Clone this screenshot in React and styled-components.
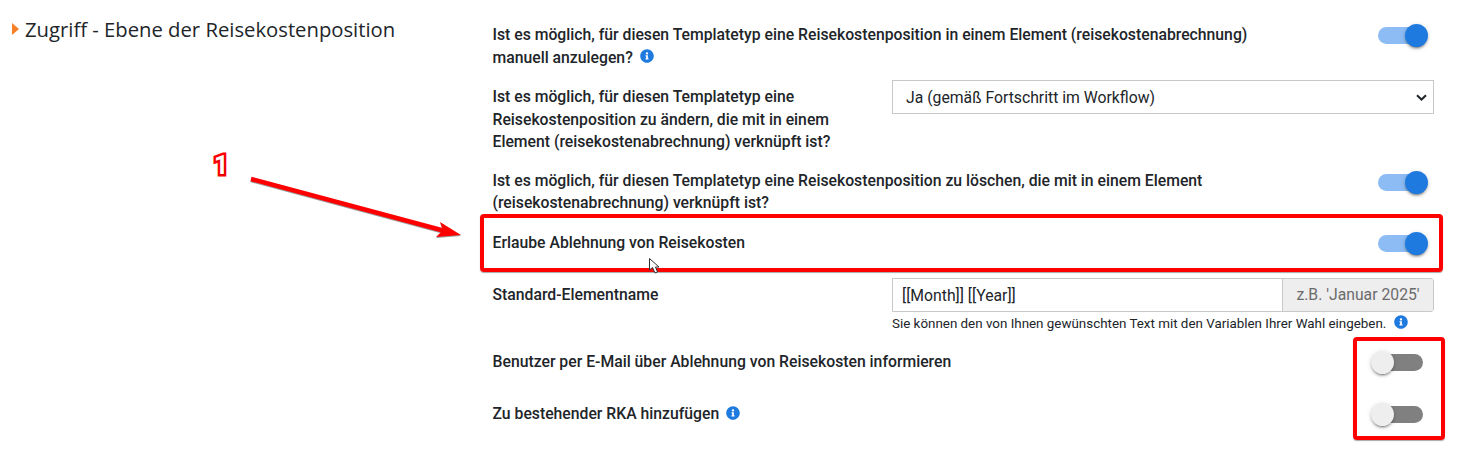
import React from "react";
import styled, { createGlobalStyle } from "styled-components";

const Global = createGlobalStyle`
  html, body { margin: 0; padding: 0; background: #fff; }
  body { font-family: Roboto, "Liberation Sans", sans-serif; color: #212529; font-size: 15.75px; line-height: 22.5px; }
`;

const Page = styled.div`
  position: relative;
  width: 1467px;
  height: 454px;
  overflow: hidden;
  display: flex;
`;

const Sidebar = styled.aside`
  width: 492.5px;
  flex: none;
  box-sizing: border-box;
  padding: 15px 0 0 12px;
`;

const Title = styled.h2`
  margin: 0;
  display: flex;
  align-items: center;
  gap: 6px;
  font: 400 20.25px/28px "Open Sans", sans-serif;
  color: #212529;
`;

const Caret = styled.span`
  width: 0;
  height: 0;
  border-left: 7px solid #f58025;
  border-top: 6px solid transparent;
  border-bottom: 6px solid transparent;
`;

const Form = styled.main`
  width: 941.5px;
  flex: none;
  padding-top: 24px;
`;

const Row = styled.div`
  display: flex;
  justify-content: space-between;
  align-items: flex-start;
  margin-top: ${(p) => p.$top || 0}px;
`;

const Label = styled.label`
  display: block;
  font-weight: 500;
  width: ${(p) => p.$w}px;
  padding-top: ${(p) => p.$pad || 0}px;
  flex: none;
`;

const InfoMark = styled.svg`
  display: inline-block;
  vertical-align: ${(p) => p.$drop}px;
  margin-left: ${(p) => p.$gap}px;
`;

const Info = ({ gap = 7, drop = -1 }) => (
  <InfoMark $gap={gap} $drop={drop} viewBox="0 0 512 512" width={14} height={14}>
    <path
      fill="#1f7ae0"
      d="M256 8C119 8 8 119 8 256s111 248 248 248 248-111 248-248S393 8 256 8zm0 110c23 0 42 19 42 42s-19 42-42 42-42-19-42-42 19-42 42-42zm56 254c0 7-5 12-12 12h-88c-7 0-12-5-12-12v-24c0-7 5-12 12-12h12v-64h-12c-7 0-12-5-12-12v-24c0-7 5-12 12-12h64c7 0 12 5 12 12v100h12c7 0 12 5 12 12v24z"
    />
  </InfoMark>
);

const Track = styled.div`
  position: relative;
  width: 47px;
  height: 17px;
  flex: none;
  border-radius: 9px;
  background: ${(p) => (p.$on ? "#8cbcf3" : "#808080")};
  margin-top: ${(p) => p.$top}px;
  margin-right: ${(p) => (p.$on ? 9 : 11)}px;
`;

const Thumb = styled.span`
  position: absolute;
  top: -3px;
  left: ${(p) => (p.$on ? "27px" : "-5px")};
  width: 23px;
  height: 23px;
  border-radius: 50%;
  background: ${(p) => (p.$on ? "#1f7ae0" : "#eeeeee")};
  box-shadow: 0 3px 1px -2px rgba(0, 0, 0, 0.25), 0 2px 2px 0 rgba(0, 0, 0, 0.2), 0 1px 5px 0 rgba(0, 0, 0, 0.16);
`;

const Toggle = ({ on, top }) => (
  <Track $on={on} $top={top}>
    <Thumb $on={on} />
  </Track>
);

const SelectBox = styled.div`
  position: relative;
  width: 542px;
  height: 34px;
  flex: none;
`;

const Select = styled.select`
  appearance: none;
  display: block;
  width: 100%;
  height: 100%;
  box-sizing: border-box;
  border: 1px solid #c8c8c8;
  background: #fff;
  border-radius: 0;
  padding: 0 30px 0 13px;
  font: 400 15.75px Roboto, sans-serif;
  color: #212529;
  outline: none;
`;

const Chevron = styled.svg`
  position: absolute;
  right: 7px;
  top: 14px;
  pointer-events: none;
`;

const Field = styled.div`
  width: 542px;
  flex: none;
`;

const InputGroup = styled.div`
  display: flex;
  height: 34px;
  box-sizing: border-box;
  border: 1px solid #c8c8c8;
  border-radius: 0 3px 3px 0;
`;

const TextInput = styled.input`
  flex: 1;
  min-width: 0;
  border: 0;
  outline: none;
  padding: 0 9px;
  font: 400 15.75px Roboto, sans-serif;
  color: #212529;
`;

const Addon = styled.span`
  width: 151px;
  flex: none;
  display: flex;
  align-items: center;
  justify-content: center;
  box-sizing: border-box;
  background: #eeeeee;
  border-left: 1px solid #c8c8c8;
  color: #6b6b6b;
  font-size: 15.75px;
`;

const Help = styled.div`
  font-size: 13.39px;
  line-height: 15px;
  margin-top: 3px;
`;

const Overlay = styled.svg`
  position: absolute;
  left: 0;
  top: 0;
  pointer-events: none;
`;

const Frame = styled.div`
  position: absolute;
  box-sizing: border-box;
  left: ${(p) => p.$x}px;
  top: ${(p) => p.$y}px;
  width: ${(p) => p.$w}px;
  height: ${(p) => p.$h}px;
  border: 4px solid #fe0000;
  border-radius: 4px;
  box-shadow: 0 1px 1px rgba(0, 0, 0, 0.35);
`;

const Number = styled.span`
  position: absolute;
  left: 214px;
  top: 151px;
  font: 700 25px/30px Roboto, sans-serif;
  color: #fff;
  -webkit-text-stroke: 5px #fe0000;
  paint-order: stroke fill;
  text-shadow: 1px 1px 1px rgba(0, 0, 0, 0.2);
`;

const ArrowGroup = styled.g`
  filter: drop-shadow(0 1px 0.5px rgba(0, 0, 0, 0.4));
`;

export default function App() {
  return (
    <>
      <Global />
      <Page>
        <Sidebar>
          <Title>
            <Caret />
            Zugriff - Ebene der Reisekostenposition
          </Title>
        </Sidebar>
        <Form>
          <Row>
            <Label $w={780}>
              Ist es möglich, für diesen Templatetyp eine Reisekostenposition in einem Element (reisekostenabrechnung)
              manuell anzulegen?
              <Info drop={0} />
            </Label>
            <Toggle on top={3} />
          </Row>
          <Row $top={11}>
            <Label $w={360} $pad={6}>
              Ist es möglich, für diesen Templatetyp eine Reisekostenposition zu ändern, die mit in einem Element
              (reisekostenabrechnung) verknüpft ist?
            </Label>
            <SelectBox>
              <Select defaultValue="ja">
                <option value="ja">Ja (gemäß Fortschritt im Workflow)</option>
              </Select>
              <Chevron width="11" height="7" viewBox="0 0 11 7">
                <path d="M1 1.2 L5.5 5.5 L10 1.2" fill="none" stroke="#212529" strokeWidth="2" />
              </Chevron>
            </SelectBox>
          </Row>
          <Row $top={16}>
            <Label $w={780}>
              Ist es möglich, für diesen Templatetyp eine Reisekostenposition zu löschen, die mit in einem Element
              (reisekostenabrechnung) verknüpft ist?
            </Label>
            <Toggle on top={4} />
          </Row>
          <Row $top={17}>
            <Label $w={780}>Erlaube Ablehnung von Reisekosten</Label>
            <Toggle on top={3} />
          </Row>
          <Row $top={24}>
            <Label $w={360} $pad={6}>
              Standard-Elementname
            </Label>
            <Field>
              <InputGroup>
                <TextInput readOnly value="[[Month]] [[Year]]" />
                <Addon>z.B. 'Januar 2025'</Addon>
              </InputGroup>
              <Help>
                Sie können den von Ihnen gewünschten Text mit den Variablen Ihrer Wahl eingeben.
                <Info gap={8} />
              </Help>
            </Field>
          </Row>
          <Row $top={20}>
            <Label $w={780}>Benutzer per E-Mail über Ablehnung von Reisekosten informieren</Label>
            <Toggle top={3} />
          </Row>
          <Row $top={29}>
            <Label $w={780}>
              Zu bestehender RKA hinzufügen
              <Info />
            </Label>
            <Toggle top={3} />
          </Row>
        </Form>
        <Frame $x={480} $y={214} $w={963} $h={58} />
        <Frame $x={1353} $y={337} $w={92} $h={103} />
        <Number>1</Number>
        <Overlay width="1467" height="454" viewBox="0 0 1467 454">
          <ArrowGroup>
            <path d="M251 179 L445 231" stroke="#fe0000" strokeWidth="4.5" fill="none" />
            <path d="M461 235 L436 237 L443 230 L440 222 Z" fill="#fe0000" />
          </ArrowGroup>
          <path
            d="M649.5 258.5 V270 L652.5 267.5 L655 273 L657.5 272 L655.5 267 L659 267 Z"
            fill="#fff"
            stroke="#333"
            strokeWidth="1"
          />
        </Overlay>
      </Page>
    </>
  );
}
